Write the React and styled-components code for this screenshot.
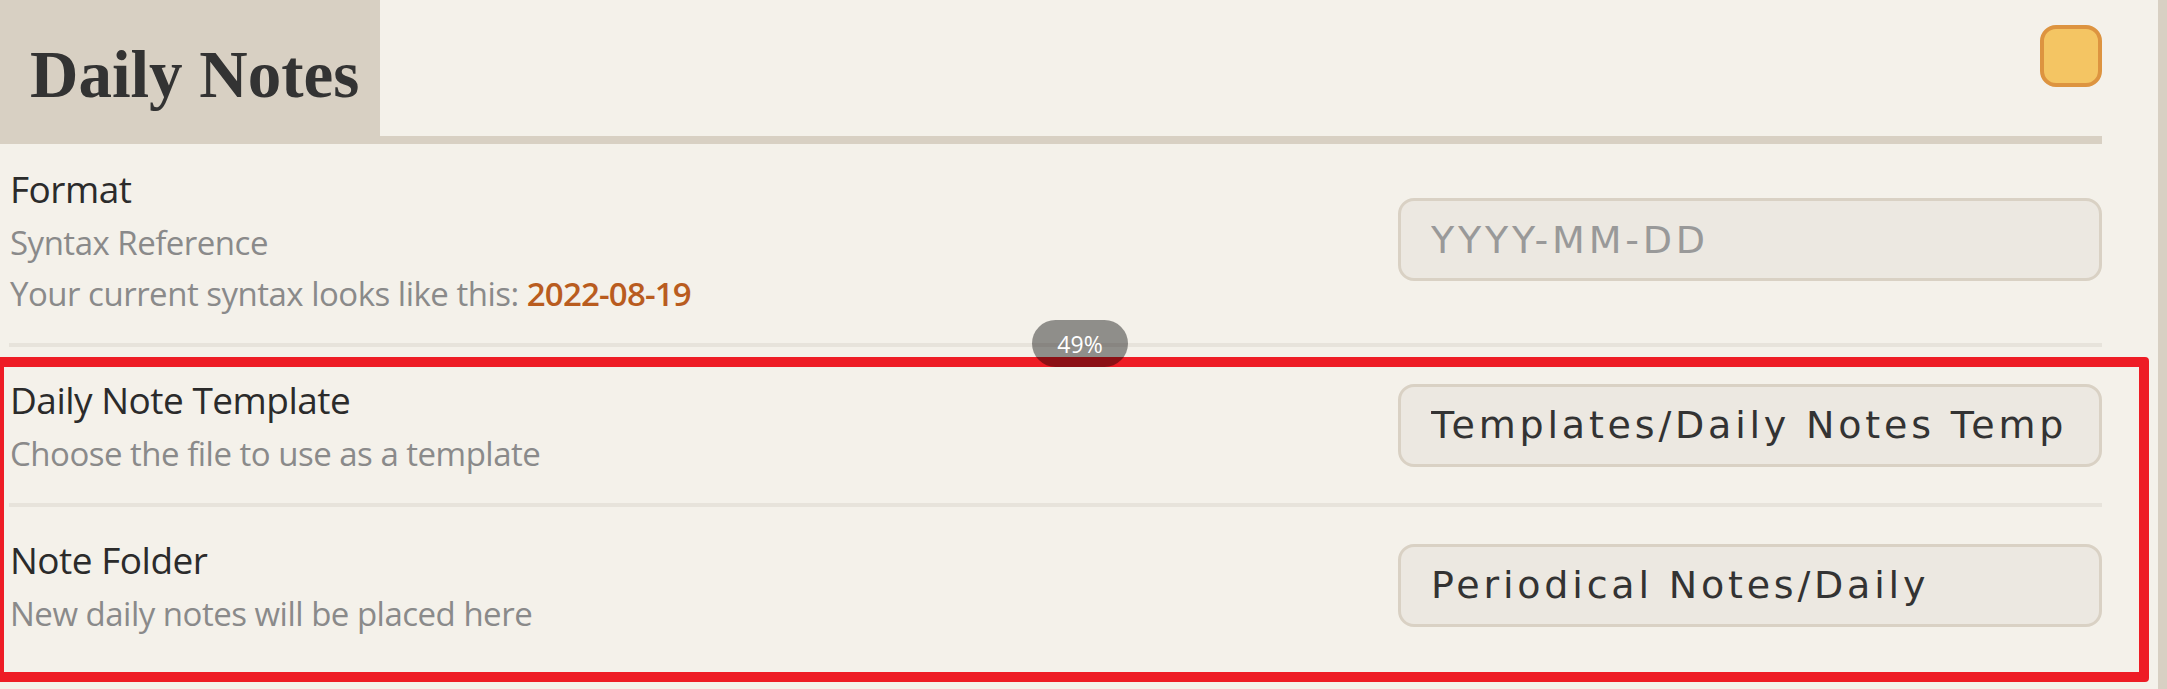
import React from 'react';
import styled, { createGlobalStyle } from 'styled-components';

const GlobalStyle = createGlobalStyle`
  html, body {
    margin: 0;
    padding: 0;
    background: #f4f1ea;
  }
`;

const Page = styled.div`
  position: relative;
  display: flex;
  width: 2167px;
  height: 689px;
  overflow: hidden;
  background: #f4f1ea;
  font-family: 'Open Sans', 'Noto Sans', sans-serif;
`;

const Main = styled.div`
  width: 2102px;
  display: flex;
  flex-direction: column;
`;

const Scrollbar = styled.div`
  margin-left: auto;
  width: 9px;
  background: #d8d0c3;
`;

const Header = styled.div`
  display: flex;
  align-items: flex-start;
  height: 136px;
  border-bottom: 8px solid #d8d0c3;
`;

const Tab = styled.div`
  width: 380px;
  height: 136px;
  box-sizing: border-box;
  padding: 41px 0 0 30px;
  background: #d8d0c3;
`;

const Title = styled.h1`
  margin: 0;
  font-family: 'Liberation Serif', 'Times New Roman', serif;
  font-size: 67px;
  line-height: 66px;
  font-weight: 700;
  color: #333;
  white-space: nowrap;
`;

const Toggle = styled.div`
  margin: 25px 0 0 auto;
  width: 62px;
  height: 62px;
  box-sizing: border-box;
  border: 4px solid #dd9440;
  border-radius: 16px;
  background: #f4c563;
`;

const List = styled.div`
  margin-left: 9px;
  display: flex;
  flex-direction: column;
`;

const Item = styled.div`
  display: flex;
  align-items: center;
  justify-content: space-between;
  padding: 24px 0;
  border-top: 4px solid #e7e3db;

  &:first-child {
    border-top: none;
    padding-top: 16px;
  }
`;

const Info = styled.div`
  display: flex;
  flex-direction: column;
  padding-left: 1px;
`;

const Name = styled.div`
  font-size: 37px;
  line-height: 57px;
  color: #2b2b2b;
  letter-spacing: -0.5px;
`;

const Description = styled.div`
  font-size: 33px;
  line-height: 51px;
  color: #8a8a8a;
  letter-spacing: -0.5px;
`;

const Accent = styled.span`
  color: #b95c1f;
  font-weight: 600;
  letter-spacing: -0.8px;
`;

const TextInput = styled.input`
  width: 704px;
  height: 83px;
  box-sizing: border-box;
  padding: 0 30px;
  border: 3px solid #d9d1c4;
  border-radius: 16px;
  background: #ece8e1;
  font-family: 'DejaVu Sans', 'Open Sans', sans-serif;
  font-size: 38px;
  letter-spacing: 3.8px;
  color: #333;
  outline: none;

  &::placeholder {
    color: #999;
  }
`;

const Highlight = styled.div`
  position: absolute;
  left: -6px;
  top: 357px;
  width: 2155px;
  height: 325px;
  box-sizing: border-box;
  border: 10px solid #ee1c25;
  border-radius: 4px;
  pointer-events: none;
`;

const ZoomPill = styled.div`
  position: absolute;
  left: 1032px;
  top: 320px;
  width: 96px;
  height: 47px;
  border-radius: 24px;
  background: rgba(0, 0, 0, 0.41);
  color: #fff;
  font-size: 23px;
  display: flex;
  align-items: center;
  justify-content: center;
`;

const settings = [
  {
    name: 'Format',
    desc: [
      'Syntax Reference',
      <>Your current syntax looks like this: <Accent>2022-08-19</Accent></>,
    ],
    placeholder: 'YYYY-MM-DD',
  },
  {
    name: 'Daily Note Template',
    desc: ['Choose the file to use as a template'],
    value: 'Templates/Daily Notes Template',
  },
  {
    name: 'Note Folder',
    desc: ['New daily notes will be placed here'],
    value: 'Periodical Notes/Daily',
  },
];

export default function App() {
  return (
    <>
      <GlobalStyle />
      <Page>
        <Main>
          <Header>
            <Tab>
              <Title>Daily Notes</Title>
            </Tab>
            <Toggle />
          </Header>
          <List>
            {settings.map((s) => (
              <Item key={s.name}>
                <Info>
                  <Name>{s.name}</Name>
                  {s.desc.map((d, i) => (
                    <Description key={i}>{d}</Description>
                  ))}
                </Info>
                <TextInput
                  readOnly
                  placeholder={s.placeholder}
                  value={s.value || ''}
                />
              </Item>
            ))}
          </List>
        </Main>
        <Scrollbar />
        <Highlight />
        <ZoomPill>49%</ZoomPill>
      </Page>
    </>
  );
}
